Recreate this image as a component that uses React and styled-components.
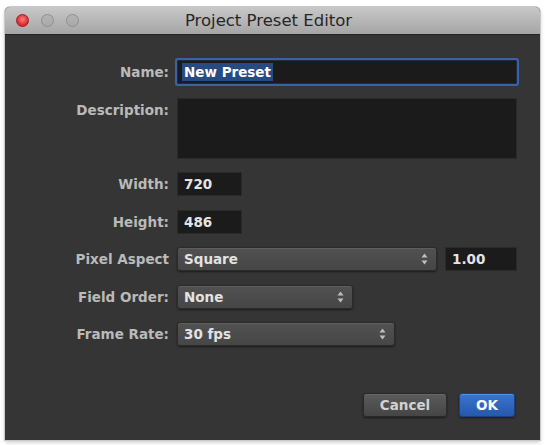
import React from 'react'
import styled, { createGlobalStyle } from 'styled-components'

const GlobalStyle = createGlobalStyle`
  html, body {
    margin: 0;
    padding: 0;
    background: #ffffff;
  }
  body {
    font-family: "DejaVu Sans", "Liberation Sans", sans-serif;
  }
`

const Page = styled.div`
  width: 545px;
  height: 445px;
  padding: 7px 5px 0 5px;
  box-sizing: border-box;
`

const Window = styled.div`
  width: 535px;
  height: 433px;
  display: flex;
  flex-direction: column;
  background: #353535;
  border-radius: 5px 5px 0 0;
  box-shadow: 0 0 0 1px #c9c9c9, 0 2px 4px rgba(0, 0, 0, 0.25);
  overflow: hidden;
`

const TitleBar = styled.div`
  height: 27px;
  flex: none;
  display: flex;
  align-items: center;
  position: relative;
  background: linear-gradient(#c8c8c8, #a5a5a5);
  border-bottom: 1px solid #232323;
  .title {
    flex: 1;
    text-align: center;
    font-size: 16.5px;
    color: #262626;
    padding-right: 8px;
  }
`

const Lights = styled.div`
  position: absolute;
  left: 11px;
  top: 7px;
  display: flex;
  gap: 12px;
`

const Light = styled.span`
  width: 13px;
  height: 13px;
  border-radius: 50%;
  box-sizing: border-box;
  background: ${p => p.$red ? 'radial-gradient(circle at 50% 40%, #ff7b7b, #d8282b 70%)' : 'linear-gradient(#b4b4b4, #a9a9a9)'};
  border: 1px solid ${p => p.$red ? '#a3191c' : '#8e8e8e'};
`

const Body = styled.div`
  display: grid;
  grid-template-columns: 144px 1fr;
  column-gap: 8px;
  row-gap: 13.5px;
  padding: 25px 23px 0 20px;
  align-items: center;
`

const Label = styled.div`
  text-align: right;
  font-size: 13.5px;
  font-weight: 700;
  color: #bababa;
  align-self: ${p => p.$top ? 'start' : 'center'};
  padding-top: ${p => p.$top ? '4px' : '0'};
  white-space: nowrap;
`

const Field = styled.div`
  box-sizing: border-box;
  width: ${p => p.$w || '100%'};
  height: ${p => p.$h || '24px'};
  background: #1b1b1b;
  border: 1px solid #2a2a2a;
  display: flex;
  align-items: center;
  padding-left: 6px;
  font-size: 13.5px;
  font-weight: 700;
  color: #e4e4e4;
  flex: none;
`

const FocusField = styled(Field)`
  border-color: #1d2b45;
  box-shadow: 0 0 0 2px #3a63a5;
  border-radius: 1px;
  padding-left: 4px;
  .sel {
    background: #284a82;
    color: #ffffff;
    padding: 1px 2px;
  }
`

const ControlRow = styled.div`
  display: flex;
  gap: 8px;
  align-items: center;
`

const Popup = styled.div`
  box-sizing: border-box;
  width: ${p => p.$w};
  height: 24px;
  display: flex;
  align-items: center;
  justify-content: space-between;
  padding: 0 8px 0 6px;
  border-radius: 3px;
  background: linear-gradient(#515151, #464646);
  border: 1px solid #2b2b2b;
  box-shadow: inset 0 1px 0 #5e5e5e, 0 1px 2px rgba(0, 0, 0, 0.5);
  font-size: 13.5px;
  font-weight: 700;
  color: #e2e2e2;
  flex: none;
`

const Footer = styled.div`
  margin-top: auto;
  display: flex;
  justify-content: flex-end;
  gap: 12px;
  padding: 0 25px 23px 0;
`

const Button = styled.button`
  box-sizing: border-box;
  width: ${p => p.$w};
  height: 24px;
  border-radius: 3px;
  font-family: inherit;
  font-size: 13.5px;
  font-weight: 700;
  padding: 0;
  color: ${p => p.$primary ? '#ffffff' : '#d2d2d2'};
  background: ${p => p.$primary ? 'linear-gradient(#3875cf, #2559ab)' : 'linear-gradient(#5b5b5b, #454545)'};
  border: 1px solid ${p => p.$primary ? '#1d4280' : '#2a2a2a'};
  box-shadow: inset 0 1px 0 ${p => p.$primary ? '#5690e0' : '#676767'}, 0 1px 2px rgba(0, 0, 0, 0.5);
`

const Stepper = () => (
  <svg width="7" height="12" viewBox="0 0 7 12">
    <path d="M3.5 0.5 L6.5 4.5 L0.5 4.5 Z" fill="#bdbdbd" />
    <path d="M3.5 11.5 L6.5 7.5 L0.5 7.5 Z" fill="#bdbdbd" />
  </svg>
)

const Select = ({ w, value }) => (
  <Popup $w={w}>
    <span>{value}</span>
    <Stepper />
  </Popup>
)

export default function App() {
  return (
    <Page>
      <GlobalStyle />
      <Window>
        <TitleBar>
          <Lights>
            <Light $red />
            <Light />
            <Light />
          </Lights>
          <div className="title">Project Preset Editor</div>
        </TitleBar>
        <Body>
          <Label>Name:</Label>
          <FocusField>
            <span className="sel">New Preset</span>
          </FocusField>

          <Label $top>Description:</Label>
          <Field $h="61px" />

          <Label>Width:</Label>
          <Field $w="65px">720</Field>

          <Label>Height:</Label>
          <Field $w="65px">486</Field>

          <Label>Pixel Aspect</Label>
          <ControlRow>
            <Select w="260px" value="Square" />
            <Field $w="72px">1.00</Field>
          </ControlRow>

          <Label>Field Order:</Label>
          <Select w="176px" value="None" />

          <Label>Frame Rate:</Label>
          <Select w="218px" value="30 fps" />
        </Body>
        <Footer>
          <Button $w="84px">Cancel</Button>
          <Button $w="56px" $primary>OK</Button>
        </Footer>
      </Window>
    </Page>
  )
}
